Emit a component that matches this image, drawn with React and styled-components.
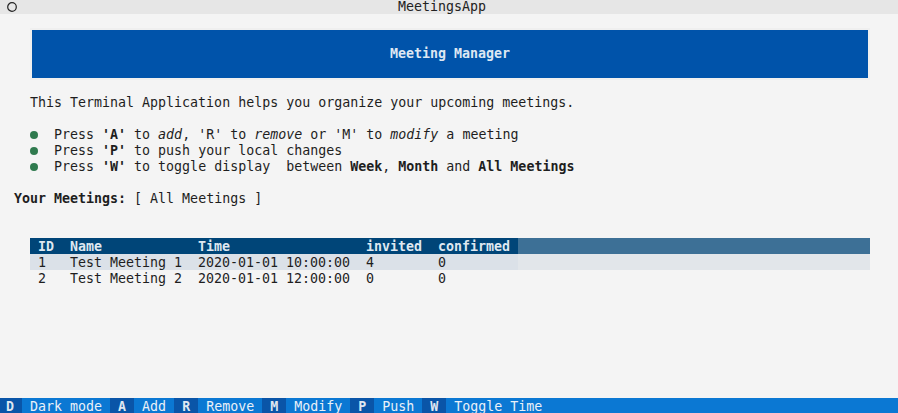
import React from 'react';
import styled, { createGlobalStyle } from 'styled-components';

const GlobalStyle = createGlobalStyle`
  html, body {
    margin: 0;
    padding: 0;
    background: #f4f4f4;
    overflow: hidden;
  }
  body {
    font-family: "DejaVu Sans Mono", "Liberation Mono", monospace;
    font-size: 13.3px;
    color: #1e1e1e;
  }
`;

const Page = styled.div`
  height: 414px;
  display: flex;
  flex-direction: column;
`;

const TitleBar = styled.div`
  height: 14px;
  background: #e6e6e6;
  display: flex;
  align-items: flex-start;
  padding-right: 14px;
  line-height: 14px;
  color: #222;
  svg {
    margin: 2px 0 0 7px;
    flex: none;
  }
  .title {
    flex: 1;
    text-align: center;
    margin-left: -17px;
  }
`;

const Main = styled.main`
  flex: 1;
  padding-top: 16px;
  line-height: 16px;
`;

const Banner = styled.div`
  margin: 0 30px 0 32px;
  height: 48px;
  background: #0053aa;
  box-shadow: 0 0 0 2px #efefef;
  color: #dde7f3;
  font-weight: bold;
  display: flex;
  align-items: center;
  justify-content: center;
`;

const Intro = styled.p`
  margin: 17px 0 0 30px;
  white-space: pre;
`;

const Bullets = styled.ul`
  margin: 16px 0 0 30px;
  padding: 0;
  list-style: none;
  li {
    display: flex;
    align-items: center;
    height: 16px;
    white-space: pre;
  }
  li::before {
    content: '';
    width: 8px;
    height: 8px;
    border-radius: 50%;
    background: #2f7a4e;
    margin-right: 16px;
    flex: none;
  }
  b { font-weight: bold; }
`;

const MeetingsLabel = styled.div`
  margin: 16px 0 0 14px;
  white-space: pre;
  b { font-weight: bold; }
`;

const Table = styled.div`
  margin: 31px 28px 0 30px;
`;

const rowColors = {
  header: { cells: '#004578', fill: '#3d7096', text: '#dfe8f1' },
  striped: { cells: '#dbe1e8', fill: '#e2e6ea', text: '#1e1e1e' },
  plain: { cells: 'transparent', fill: 'transparent', text: '#1e1e1e' },
};

const Row = styled.div`
  display: flex;
  height: 16px;
  color: ${(p) => rowColors[p.$kind].text};
  font-weight: ${(p) => (p.$kind === 'header' ? 'bold' : 'normal')};
  background: ${(p) => rowColors[p.$kind].fill};
`;

const Cell = styled.div`
  width: ${(p) => p.$w}px;
  height: 15px;
  padding: 1px 8px 0;
  line-height: 16px;
  white-space: pre;
  flex: none;
  background: ${(p) => rowColors[p.$kind].cells};
`;

const Footer = styled.footer`
  height: 16px;
  background: #0b78d3;
  display: flex;
  margin-left: -2px;
  white-space: pre;
  overflow: hidden;
`;

const Key = styled.span`
  padding: 1px 8px 0;
  line-height: 16px;
  background: #0a55a8;
  color: #dfe7f1;
  font-weight: bold;
`;

const KeyLabel = styled.span`
  padding: 1px 8px 0;
  line-height: 16px;
  color: #e9f0f8;
`;

const columns = [
  { label: 'ID', key: 'id', w: 16 },
  { label: 'Name', key: 'name', w: 112 },
  { label: 'Time', key: 'time', w: 152 },
  { label: 'invited', key: 'invited', w: 56 },
  { label: 'confirmed', key: 'confirmed', w: 72 },
];

const meetings = [
  { id: 1, name: 'Test Meeting 1', time: '2020-01-01 10:00:00', invited: 4, confirmed: 0 },
  { id: 2, name: 'Test Meeting 2', time: '2020-01-01 12:00:00', invited: 0, confirmed: 0 },
];

const bindings = [
  ['D', 'Dark mode'],
  ['A', 'Add'],
  ['R', 'Remove'],
  ['M', 'Modify'],
  ['P', 'Push'],
  ['W', 'Toggle Time'],
];

const App = () => (
  <Page>
    <GlobalStyle />
    <TitleBar>
      <svg width="10" height="10" viewBox="0 0 10 10">
        <circle cx="5" cy="5" r="4.3" fill="none" stroke="#222" strokeWidth="1.2" />
      </svg>
      <div className="title">MeetingsApp</div>
    </TitleBar>
    <Main>
      <Banner>Meeting Manager</Banner>
      <Intro>This Terminal Application helps you organize your upcoming meetings.</Intro>
      <Bullets>
        <li>
          Press <b>'A'</b> to <i>add</i>, 'R' to <i>remove</i> or 'M' to <i>modify</i> a meeting
        </li>
        <li>
          Press <b>'P'</b> to push your local changes
        </li>
        <li>
          Press <b>'W'</b> to toggle display  between <b>Week</b>, <b>Month</b> and <b>All Meetings</b>
        </li>
      </Bullets>
      <MeetingsLabel>
        <b>Your Meetings:</b> [ All Meetings ]
      </MeetingsLabel>
      <Table>
        <Row $kind="header">
          {columns.map((c) => (
            <Cell key={c.key} $w={c.w} $kind="header">
              {c.label}
            </Cell>
          ))}
        </Row>
        {meetings.map((m, i) => {
          const kind = i % 2 === 0 ? 'striped' : 'plain';
          return (
            <Row key={m.id} $kind={kind}>
              {columns.map((c) => (
                <Cell key={c.key} $w={c.w} $kind={kind}>
                  {m[c.key]}
                </Cell>
              ))}
            </Row>
          );
        })}
      </Table>
    </Main>
    <Footer>
      {bindings.map(([k, label]) => (
        <React.Fragment key={k}>
          <Key>{k}</Key>
          <KeyLabel>{label}</KeyLabel>
        </React.Fragment>
      ))}
    </Footer>
  </Page>
);

export default App;
